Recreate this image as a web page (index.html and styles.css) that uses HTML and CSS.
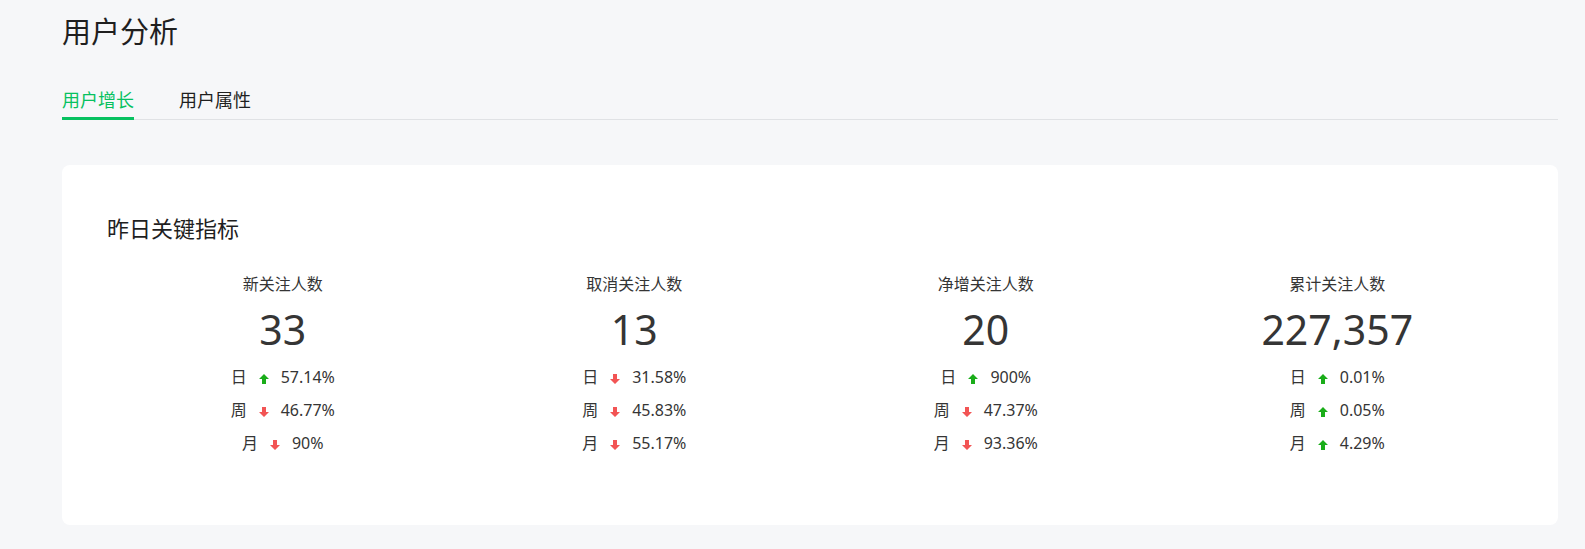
FILE: index.html
```html
<!DOCTYPE html>
<html lang="zh-CN">
<head>
<meta charset="utf-8">
<title>用户分析</title>
<link rel="stylesheet" href="styles.css">
</head>
<body>
<div class="page">
  <h1 class="page-title">用户分析</h1>
  <div class="tabs">
    <div class="tab active">用户增长</div>
    <div class="tab">用户属性</div>
  </div>
  <section class="card">
    <h2 class="card-title">昨日关键指标</h2>
    <div class="metrics">
      <div class="metric">
        <div class="metric-label">新关注人数</div>
        <div class="metric-value">33</div>
        <div class="row"><span class="row-label">日</span><svg class="arrow up" viewBox="0 0 10 10"><path d="M5 0 L10 5 H7 V10 H3 V5 H0 Z"/></svg><span class="row-val">57.14%</span></div>
        <div class="row"><span class="row-label">周</span><svg class="arrow down" viewBox="0 0 10 10"><path d="M5 10 L0 5 H3 V0 H7 V5 H10 Z"/></svg><span class="row-val">46.77%</span></div>
        <div class="row"><span class="row-label">月</span><svg class="arrow down" viewBox="0 0 10 10"><path d="M5 10 L0 5 H3 V0 H7 V5 H10 Z"/></svg><span class="row-val">90%</span></div>
      </div>
      <div class="metric">
        <div class="metric-label">取消关注人数</div>
        <div class="metric-value">13</div>
        <div class="row"><span class="row-label">日</span><svg class="arrow down" viewBox="0 0 10 10"><path d="M5 10 L0 5 H3 V0 H7 V5 H10 Z"/></svg><span class="row-val">31.58%</span></div>
        <div class="row"><span class="row-label">周</span><svg class="arrow down" viewBox="0 0 10 10"><path d="M5 10 L0 5 H3 V0 H7 V5 H10 Z"/></svg><span class="row-val">45.83%</span></div>
        <div class="row"><span class="row-label">月</span><svg class="arrow down" viewBox="0 0 10 10"><path d="M5 10 L0 5 H3 V0 H7 V5 H10 Z"/></svg><span class="row-val">55.17%</span></div>
      </div>
      <div class="metric">
        <div class="metric-label">净增关注人数</div>
        <div class="metric-value">20</div>
        <div class="row"><span class="row-label">日</span><svg class="arrow up" viewBox="0 0 10 10"><path d="M5 0 L10 5 H7 V10 H3 V5 H0 Z"/></svg><span class="row-val">900%</span></div>
        <div class="row"><span class="row-label">周</span><svg class="arrow down" viewBox="0 0 10 10"><path d="M5 10 L0 5 H3 V0 H7 V5 H10 Z"/></svg><span class="row-val">47.37%</span></div>
        <div class="row"><span class="row-label">月</span><svg class="arrow down" viewBox="0 0 10 10"><path d="M5 10 L0 5 H3 V0 H7 V5 H10 Z"/></svg><span class="row-val">93.36%</span></div>
      </div>
      <div class="metric">
        <div class="metric-label">累计关注人数</div>
        <div class="metric-value">227,357</div>
        <div class="row"><span class="row-label">日</span><svg class="arrow up" viewBox="0 0 10 10"><path d="M5 0 L10 5 H7 V10 H3 V5 H0 Z"/></svg><span class="row-val">0.01%</span></div>
        <div class="row"><span class="row-label">周</span><svg class="arrow up" viewBox="0 0 10 10"><path d="M5 0 L10 5 H7 V10 H3 V5 H0 Z"/></svg><span class="row-val">0.05%</span></div>
        <div class="row"><span class="row-label">月</span><svg class="arrow up" viewBox="0 0 10 10"><path d="M5 0 L10 5 H7 V10 H3 V5 H0 Z"/></svg><span class="row-val">4.29%</span></div>
      </div>
    </div>
  </section>
</div>
</body>
</html>
```

FILE: styles.css
```css
* { box-sizing: border-box; }
html, body {
  margin: 0;
  padding: 0;
  background: #f6f7f9;
  overflow: hidden;
}
body {
  font-family: "Noto Sans", "Noto Sans CJK SC", sans-serif;
  color: #353535;
}
.page {
  padding: 12px 27px 0 62px;
}
.page-title {
  margin: 0;
  font-size: 29px;
  line-height: 40px;
  font-weight: 400;
  color: #1f1f1f;
}
.tabs {
  display: flex;
  gap: 45px;
  margin-top: 36px;
  border-bottom: 1px solid #e0e2e5;
}
.tab {
  font-size: 18px;
  line-height: 24px;
  padding-bottom: 5px;
  margin-bottom: -1px;
  border-bottom: 3px solid transparent;
  color: #1f1f1f;
}
.tab.active {
  color: #07c160;
  border-bottom-color: #07c160;
}
.card {
  margin-top: 45px;
  background: #ffffff;
  border-radius: 8px;
  padding: 48px 45px 65px 45px;
}
.card-title {
  margin: 0;
  font-size: 22px;
  line-height: 30px;
  font-weight: 400;
  color: #1f1f1f;
}
.metrics {
  display: grid;
  grid-template-columns: repeat(4, 1fr);
  margin-top: 29px;
}
.metric {
  display: flex;
  flex-direction: column;
  align-items: center;
}
.metric-label {
  font-size: 16px;
  line-height: 24px;
  color: #353535;
}
.metric-value {
  margin-top: 8px;
  font-size: 41px;
  line-height: 50px;
  color: #353535;
}
.row {
  display: flex;
  align-items: center;
  gap: 12px;
  font-size: 16px;
  line-height: 33px;
  color: #353535;
}
.metric-value + .row { margin-top: 7px; }
.arrow {
  width: 10px;
  height: 10px;
  margin-top: 3px;
}
.arrow.up { fill: #1aad19; }
.arrow.down { fill: #f25454; }
```
